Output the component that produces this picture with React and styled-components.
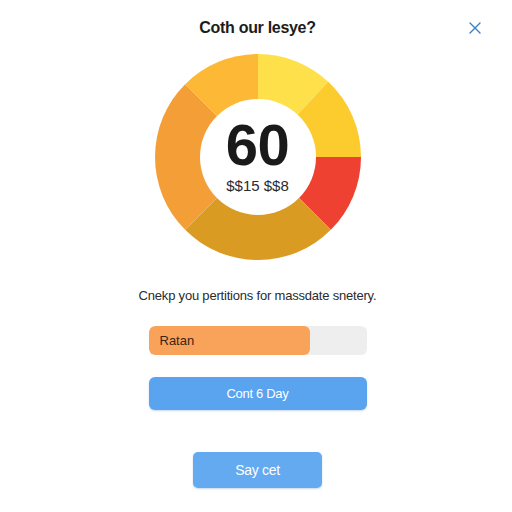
import styled, { createGlobalStyle } from "styled-components";

const GlobalStyle = createGlobalStyle`
  html, body {
    margin: 0;
    padding: 0;
    background: #ffffff;
  }
  body {
    font-family: "Liberation Sans", Arial, sans-serif;
  }
`;

const Page = styled.main`
  width: 512px;
  height: 512px;
  box-sizing: border-box;
  padding: 18px 0 0 3px;
  display: flex;
  flex-direction: column;
  align-items: center;
  background: #ffffff;
  overflow: hidden;
`;

const Header = styled.header`
  width: 100%;
  display: grid;
  grid-template-columns: 1fr auto 1fr;
  align-items: center;
`;

const Title = styled.h1`
  grid-column: 2;
  margin: 0;
  font-size: 16px;
  line-height: 20px;
  font-weight: 700;
  letter-spacing: -0.3px;
  color: #1c1c1c;
`;

const CloseButton = styled.button`
  grid-column: 3;
  justify-self: end;
  margin-right: 31px;
  width: 12px;
  height: 12px;
  padding: 0;
  border: none;
  background: none;
  display: flex;
  cursor: pointer;
`;

const Donut = styled.div`
  margin-top: 16px;
  width: 206px;
  height: 206px;
  display: grid;

  & > * {
    grid-area: 1 / 1;
  }
`;

const Center = styled.div`
  display: flex;
  flex-direction: column;
  align-items: center;
  justify-content: center;
  padding-bottom: 9px;
`;

const Score = styled.span`
  font-size: 58px;
  line-height: 65px;
  font-weight: 700;
  color: #1a1a1a;
  letter-spacing: -0.5px;
`;

const Amount = styled.span`
  font-size: 15px;
  line-height: 17px;
  color: #2a2a2a;
`;

const Description = styled.p`
  margin: 28px 0 0;
  font-size: 13px;
  line-height: 16px;
  letter-spacing: -0.2px;
  color: #2b2b2b;
`;

const Track = styled.div`
  margin-top: 22px;
  width: 218px;
  height: 29px;
  border-radius: 6px;
  background: #eeeeee;
  display: flex;
  overflow: hidden;
`;

const Fill = styled.div`
  height: 100%;
  border-radius: 6px;
  background: #f9a25a;
  display: flex;
  align-items: center;
  padding-left: 11px;
  box-sizing: border-box;
  font-size: 13px;
  color: #3a2612;
`;

const Button = styled.button`
  margin-top: ${({ $gap }) => $gap}px;
  width: ${({ $w }) => $w}px;
  height: ${({ $h }) => $h}px;
  border: none;
  border-radius: ${({ $r }) => $r}px;
  background: ${({ $bg }) => $bg};
  color: #ffffff;
  font-family: "Liberation Sans", Arial, sans-serif;
  font-size: ${({ $fs }) => $fs}px;
  letter-spacing: -0.3px;
  box-shadow: 0 1px 2px rgba(40, 100, 170, 0.25);
  cursor: pointer;
`;

const segments = [
  [0, 43, "#fee14a"],
  [43, 90, "#fccb2e"],
  [90, 135, "#ef4131"],
  [135, 225, "#d99b22"],
  [225, 315, "#f49e38"],
  [315, 360, "#fdb935"],
];

function point(deg, r) {
  const a = ((deg - 90) * Math.PI) / 180;
  return [103 + r * Math.cos(a), 103 + r * Math.sin(a)];
}

function sector(from, to) {
  const [x1, y1] = point(from, 103);
  const [x2, y2] = point(to, 103);
  const large = to - from > 180 ? 1 : 0;
  return `M103 103 L${x1} ${y1} A103 103 0 ${large} 1 ${x2} ${y2} Z`;
}

export default function App() {
  const progress = 0.74;

  return (
    <>
      <GlobalStyle />
      <Page>
        <Header>
          <Title>Coth our lesye?</Title>
          <CloseButton aria-label="Close">
            <svg width="12" height="12" viewBox="0 0 12 12">
              <path
                d="M1 1 L11 11 M11 1 L1 11"
                stroke="#3a7fc6"
                strokeWidth="1.4"
                strokeLinecap="round"
              />
            </svg>
          </CloseButton>
        </Header>

        <Donut>
          <svg width="206" height="206" viewBox="0 0 206 206">
            {segments.map(([from, to, color]) => (
              <path key={from} d={sector(from, to)} fill={color} />
            ))}
            <circle cx="103" cy="103" r="58" fill="#ffffff" />
          </svg>
          <Center>
            <Score>60</Score>
            <Amount>$$15 $$8</Amount>
          </Center>
        </Donut>

        <Description>Cnekp you pertitions for massdate snetery.</Description>

        <Track>
          <Fill style={{ width: `${progress * 100}%` }}>Ratan</Fill>
        </Track>

        <Button $gap={22} $w={218} $h={33} $r={6} $bg="#5aa3ef" $fs={13}>
          Cont 6 Day
        </Button>
        <Button $gap={42} $w={129} $h={36} $r={5} $bg="#63aaf0" $fs={14}>
          Say cet
        </Button>
      </Page>
    </>
  );
}
